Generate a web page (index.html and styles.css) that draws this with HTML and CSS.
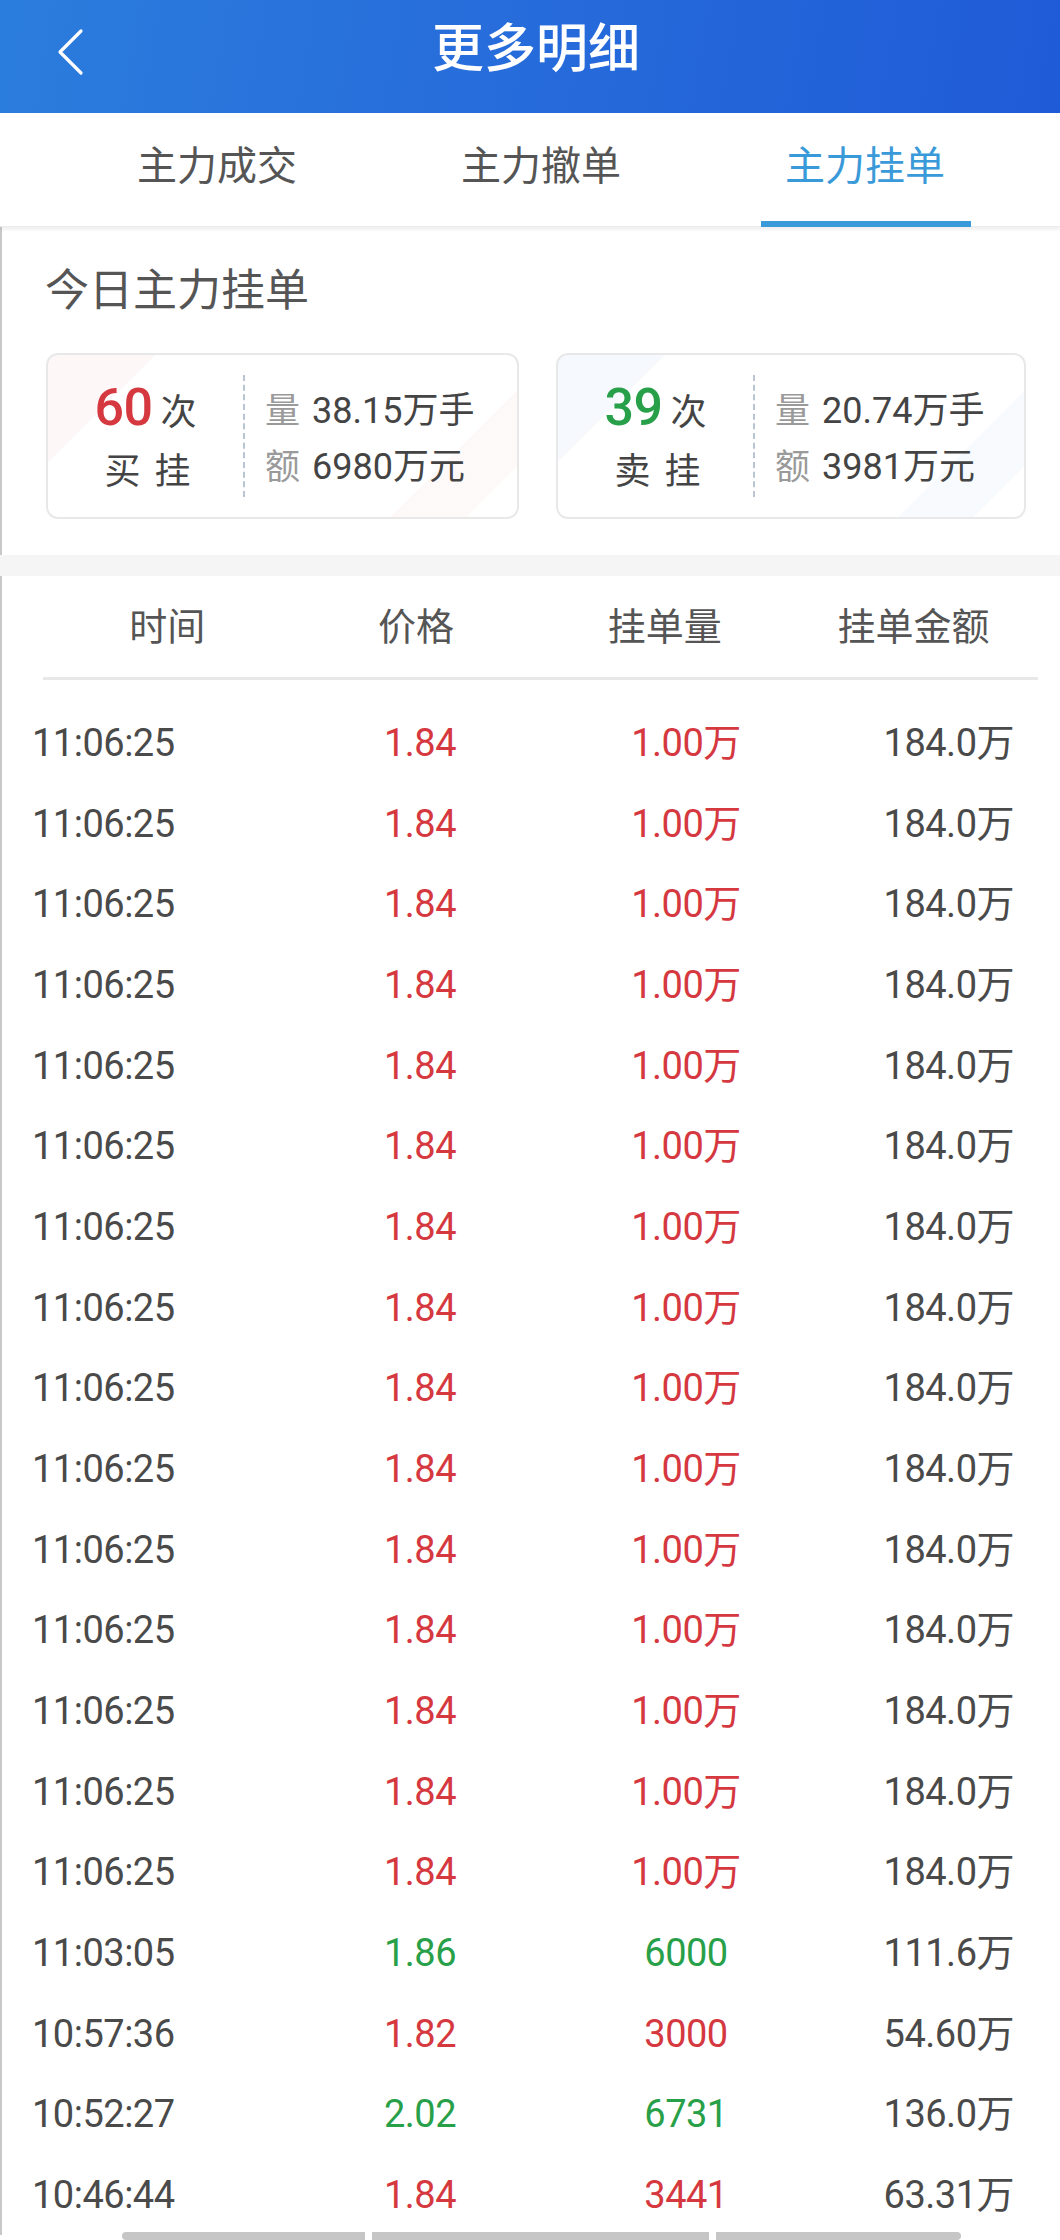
FILE: index.html
```html
<!DOCTYPE html>
<html lang="zh-CN">
<head>
<meta charset="utf-8">
<title>更多明细</title>
<link rel="stylesheet" href="styles.css">
</head>
<body>
<header class="topbar">
  <div class="back">
    <svg width="30" height="48" viewBox="0 0 30 48"><path d="M25 3 L4 24 L25 45" fill="none" stroke="#fff" stroke-width="3.2" stroke-linecap="round" stroke-linejoin="round"/></svg>
  </div>
  <h1 class="title">更多明细</h1>
  <div></div>
</header>
<nav class="tabs">
  <div class="tab">主力成交</div>
  <div class="tab">主力撤单</div>
  <div class="tab active">主力挂单</div>
</nav>
<main class="page">
  <section class="summary">
    <h2 class="sum-title">今日主力挂单</h2>
    <div class="cards">
      <div class="card buy">
        <div class="count-block">
          <div class="count"><span class="num red">60</span><span class="ci">次</span></div>
          <div class="label">买<span class="sp"></span>挂</div>
        </div>
        <div class="dash"></div>
        <div class="stats">
          <div class="stat"><span class="k">量</span><span class="v">38.15万手</span></div>
          <div class="stat"><span class="k">额</span><span class="v">6980万元</span></div>
        </div>
      </div>
      <div class="card sell">
        <div class="count-block">
          <div class="count"><span class="num green">39</span><span class="ci">次</span></div>
          <div class="label">卖<span class="sp"></span>挂</div>
        </div>
        <div class="dash"></div>
        <div class="stats">
          <div class="stat"><span class="k">量</span><span class="v">20.74万手</span></div>
          <div class="stat"><span class="k">额</span><span class="v">3981万元</span></div>
        </div>
      </div>
    </div>
  </section>
  <div class="band"></div>
  <div class="thead">
    <div>时间</div><div>价格</div><div>挂单量</div><div>挂单金额</div>
  </div>
  <div class="tbody">
    <div class="row"><span class="t">11:06:25</span><span class="p red">1.84</span><span class="q red">1.00万</span><span class="a">184.0万</span></div>
    <div class="row"><span class="t">11:06:25</span><span class="p red">1.84</span><span class="q red">1.00万</span><span class="a">184.0万</span></div>
    <div class="row"><span class="t">11:06:25</span><span class="p red">1.84</span><span class="q red">1.00万</span><span class="a">184.0万</span></div>
    <div class="row"><span class="t">11:06:25</span><span class="p red">1.84</span><span class="q red">1.00万</span><span class="a">184.0万</span></div>
    <div class="row"><span class="t">11:06:25</span><span class="p red">1.84</span><span class="q red">1.00万</span><span class="a">184.0万</span></div>
    <div class="row"><span class="t">11:06:25</span><span class="p red">1.84</span><span class="q red">1.00万</span><span class="a">184.0万</span></div>
    <div class="row"><span class="t">11:06:25</span><span class="p red">1.84</span><span class="q red">1.00万</span><span class="a">184.0万</span></div>
    <div class="row"><span class="t">11:06:25</span><span class="p red">1.84</span><span class="q red">1.00万</span><span class="a">184.0万</span></div>
    <div class="row"><span class="t">11:06:25</span><span class="p red">1.84</span><span class="q red">1.00万</span><span class="a">184.0万</span></div>
    <div class="row"><span class="t">11:06:25</span><span class="p red">1.84</span><span class="q red">1.00万</span><span class="a">184.0万</span></div>
    <div class="row"><span class="t">11:06:25</span><span class="p red">1.84</span><span class="q red">1.00万</span><span class="a">184.0万</span></div>
    <div class="row"><span class="t">11:06:25</span><span class="p red">1.84</span><span class="q red">1.00万</span><span class="a">184.0万</span></div>
    <div class="row"><span class="t">11:06:25</span><span class="p red">1.84</span><span class="q red">1.00万</span><span class="a">184.0万</span></div>
    <div class="row"><span class="t">11:06:25</span><span class="p red">1.84</span><span class="q red">1.00万</span><span class="a">184.0万</span></div>
    <div class="row"><span class="t">11:06:25</span><span class="p red">1.84</span><span class="q red">1.00万</span><span class="a">184.0万</span></div>
    <div class="row"><span class="t">11:03:05</span><span class="p green">1.86</span><span class="q green">6000</span><span class="a">111.6万</span></div>
    <div class="row"><span class="t">10:57:36</span><span class="p red">1.82</span><span class="q red">3000</span><span class="a">54.60万</span></div>
    <div class="row"><span class="t">10:52:27</span><span class="p green">2.02</span><span class="q green">6731</span><span class="a">136.0万</span></div>
    <div class="row"><span class="t">10:46:44</span><span class="p red">1.84</span><span class="q red">3441</span><span class="a">63.31万</span></div>
  </div>
</main>
<div class="scrollbars">
  <span class="seg s1"></span><span class="seg s2"></span><span class="seg s3"></span>
</div>
</body>
</html>
```
FILE: styles.css
```css
html, body {
  margin: 0;
  padding: 0;
  background: #fff;
}
body {
  width: 1060px;
  height: 2240px;
  overflow: hidden;
  position: relative;
  font-family: "Noto Sans CJK SC", "Noto Sans", sans-serif;
  color: #555;
}
h1, h2 { margin: 0; font-weight: 400; }

.topbar {
  height: 113px;
  display: grid;
  grid-template-columns: 1fr auto 1fr;
  align-items: center;
  background: linear-gradient(100deg, #2b7ddd 0%, #276ddb 45%, #1f5bd7 100%);
}
.back {
  padding-left: 56px;
  display: flex;
  align-items: center;
  height: 48px;
  margin-top: -10px;
}
.title {
  color: #fff;
  font-size: 52px;
  line-height: 60px;
  font-weight: 500;
  margin-top: -24px;
  margin-left: 12px;
}

.tabs {
  height: 113px;
  display: grid;
  grid-template-columns: 324px 324px 324px;
  padding-left: 55px;
  box-shadow: 0 3px 3px rgba(0,0,0,0.06);
  position: relative;
  border-bottom: 1px solid #ececec;
}
.tab {
  position: relative;
  display: flex;
  align-items: center;
  justify-content: center;
  font-size: 40px;
  color: #555;
  padding-bottom: 14px;
}
.tab.active { color: #3a9ad9; }
.tab.active::after {
  content: "";
  position: absolute;
  left: 50%;
  bottom: -1px;
  width: 210px;
  margin-left: -104px;
  height: 6px;
  background: #3a9ad9;
}

.page {
  box-shadow: inset 2px 0 0 #c8c8c8;
}
.summary {
  padding: 30px 34px 36px 46px;
}
.sum-title {
  font-size: 44px;
  line-height: 60px;
  color: #555;
  margin-left: -1px;
}
.cards {
  margin-top: 36px;
  display: grid;
  grid-template-columns: 473px 470px;
  gap: 37px;
}
.card {
  height: 166px;
  box-sizing: border-box;
  border: 2px solid #e8e8e8;
  border-radius: 12px;
  display: grid;
  grid-template-columns: 195px 2px 1fr;
  align-items: center;
  padding: 20px 0;
}
.card.buy {
  background:
    linear-gradient(135deg, rgba(253,238,238,0.45) 0 17%, transparent 17% 100%),
    linear-gradient(315deg, transparent 0 8%, rgba(253,240,240,0.4) 8% 20%, transparent 20% 100%),
    #fff;
}
.card.sell {
  background:
    linear-gradient(135deg, rgba(236,243,252,0.5) 0 17%, transparent 17% 100%),
    linear-gradient(315deg, transparent 0 8%, rgba(238,244,252,0.45) 8% 20%, transparent 20% 100%),
    #fff;
}
.count-block {
  display: flex;
  flex-direction: column;
  align-items: center;
}
.count {
  display: flex;
  align-items: baseline;
  height: 58px;
  line-height: 58px;
}
.num {
  font-family: Roboto, "Liberation Sans", sans-serif;
  font-size: 52px;
  font-weight: 500;
  letter-spacing: -0.5px;
}
.ci {
  font-size: 36px;
  color: #444;
  margin-left: 8px;
}
.label {
  font-size: 36px;
  line-height: 50px;
  color: #444;
  margin-top: 6px;
  margin-left: 4px;
}
.label .sp {
  display: inline-block;
  width: 14px;
}
.dash {
  width: 0;
  height: 122px;
  border-left: 2px dashed #b9c5d2;
}
.stats {
  padding-left: 20px;
  display: flex;
  flex-direction: column;
  gap: 4px;
}
.stat {
  display: flex;
  align-items: baseline;
  height: 52px;
  line-height: 52px;
}
.k {
  font-size: 35px;
  color: #9a9a9a;
  margin-right: 12px;
}
.v {
  font-family: Roboto, "Noto Sans CJK SC", sans-serif;
  font-size: 36px;
  color: #444;
}

.red { color: #d5383f; }
.green { color: #28a049; }

.band {
  height: 21px;
  background: #f5f5f5;
}

.thead {
  margin: 0 22px 0 43px;
  height: 101px;
  display: grid;
  grid-template-columns: repeat(4, 1fr);
  align-items: center;
  border-bottom: 3px solid #e8e8e8;
  font-size: 38px;
  color: #555;
  text-align: center;
}
.thead div { margin-top: -6px; }

.tbody {
  padding-top: 23px;
}
.row {
  height: 80.67px;
  display: grid;
  grid-template-columns: 258px 260px 272px 1fr;
  align-items: baseline;
  padding: 0 46px 0 32px;
  font-family: Roboto, "Noto Sans CJK SC", sans-serif;
  font-size: 38px;
  line-height: 80.67px;
  letter-spacing: -0.5px;
  color: #4a4a4a;
}
.row span { display: block; height: 80.67px; }
.row .t { text-align: left; }
.row .p { text-align: center; }
.row .q { text-align: center; }
.row .a { text-align: right; }

.scrollbars {
  position: absolute;
  left: 122px;
  top: 2232px;
  display: flex;
  gap: 7px;
}
.seg {
  display: block;
  height: 8px;
  background: #c6c6c6;
}
.s1 { width: 243px; border-radius: 4px 0 0 4px; }
.s2 { width: 337px; }
.s3 { width: 245px; border-radius: 0 4px 4px 0; }
```
